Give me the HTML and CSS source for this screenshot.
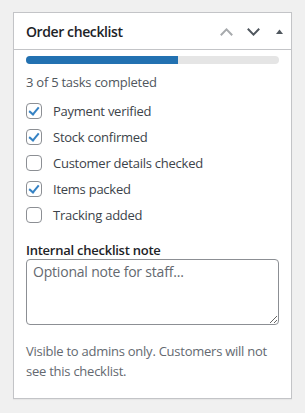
FILE: index.html
```html
<!DOCTYPE html>
<html lang="en">
<head>
    <meta charset="UTF-8">
    <meta name="viewport" content="width=device-width, initial-scale=1.0">
    <title>Order checklist</title>
    <link rel="stylesheet" href="styles.css">
</head>
<body>

    <div class="postbox">
        <div class="postbox-header">
            <h2>Order checklist</h2>
            <div class="handle-actions">
                <svg class="handle" width="13" height="8" viewBox="0 0 13 8"><path d="M0.8 7.2 L6.5 1.4 L12.2 7.2" fill="none" stroke="#a7aaad" stroke-width="2"/></svg>
                <svg class="handle" width="13" height="8" viewBox="0 0 13 8"><path d="M0.8 0.8 L6.5 6.6 L12.2 0.8" fill="none" stroke="#50575e" stroke-width="2"/></svg>
                <svg class="handle toggle" width="7" height="5" viewBox="0 0 7 5"><path d="M0 5 L3.5 0.5 L7 5 Z" fill="#50575e"/></svg>
            </div>
        </div>

        <div class="inside">
            <div class="progress"><div class="progress-fill" style="width: 60%"></div></div>
            <p class="progress-text">3 of 5 tasks completed</p>

            <ul class="checklist">
                <li><label><input type="checkbox" checked> Payment verified</label></li>
                <li><label><input type="checkbox" checked> Stock confirmed</label></li>
                <li><label><input type="checkbox"> Customer details checked</label></li>
                <li><label><input type="checkbox" checked> Items packed</label></li>
                <li><label><input type="checkbox"> Tracking added</label></li>
            </ul>

            <label class="note-label" for="note">Internal checklist note</label>
            <textarea id="note" placeholder="Optional note for staff..."></textarea>

            <p class="description">Visible to admins only. Customers will not see this checklist.</p>
        </div>
    </div>

</body>
</html>
```

FILE: styles.css
```css
body {
    margin: 0;
    padding: 12px 13px;
    background: #f0f0f0;
    font-family: "Open Sans", "Noto Sans", sans-serif;
    font-size: 13px;
    letter-spacing: -0.25px;
    color: #3c434a;
}

.postbox {
    background: #fff;
    border: 1px solid #c3c4c7;
    box-shadow: 0 1px 1px rgba(0, 0, 0, 0.04);
}

.postbox-header {
    display: flex;
    align-items: center;
    justify-content: space-between;
    height: 36px;
    padding: 0 8px 0 12px;
    border-bottom: 1px solid #c3c4c7;
}

.postbox-header h2 {
    margin: 0;
    font-size: 14px;
    font-weight: 600;
    letter-spacing: -0.4px;
    color: #1d2327;
}

.handle-actions {
    display: flex;
    align-items: center;
    padding-top: 1px;
}

.handle {
    display: block;
    margin-left: 14px;
}

.handle.toggle {
    margin-left: 16px;
}

.inside {
    padding: 6px 12px 17px;
}

.progress {
    height: 8px;
    background: #e5e5e5;
    border-radius: 4px;
    overflow: hidden;
}

.progress-fill {
    height: 100%;
    background: #2271b1;
}

.progress-text {
    margin: 8px 0 6px;
    line-height: 20px;
    color: #50575e;
}

.checklist {
    list-style: none;
    margin: 0;
    padding: 0;
}

.checklist li {
    height: 26px;
    display: flex;
    align-items: center;
}

.checklist label {
    display: flex;
    align-items: center;
    gap: 11px;
}

input[type="checkbox"] {
    appearance: none;
    margin: 0;
    width: 16px;
    height: 16px;
    border: 1px solid #8c8f94;
    border-radius: 4px;
    background: #fff;
    position: relative;
}

input[type="checkbox"]:checked::after {
    content: "";
    position: absolute;
    left: 4px;
    top: 1px;
    width: 4px;
    height: 8px;
    border: solid #3582c4;
    border-width: 0 2.5px 2.5px 0;
    transform: rotate(40deg);
}

.note-label {
    display: block;
    margin-top: 13px;
    font-weight: 600;
    color: #1d2327;
    line-height: 18px;
}

textarea {
    display: block;
    box-sizing: border-box;
    width: 100%;
    height: 66px;
    margin-top: 0;
    padding: 2px 6px;
    border: 1px solid #8c8f94;
    border-radius: 4px;
    font-family: inherit;
    font-size: 14px;
    letter-spacing: -0.2px;
    line-height: 20px;
    color: #2c3338;
    resize: vertical;
}

textarea::placeholder {
    color: #646970;
}

.description {
    margin: 16px 0 0;
    line-height: 20px;
    color: #646970;
}
```
